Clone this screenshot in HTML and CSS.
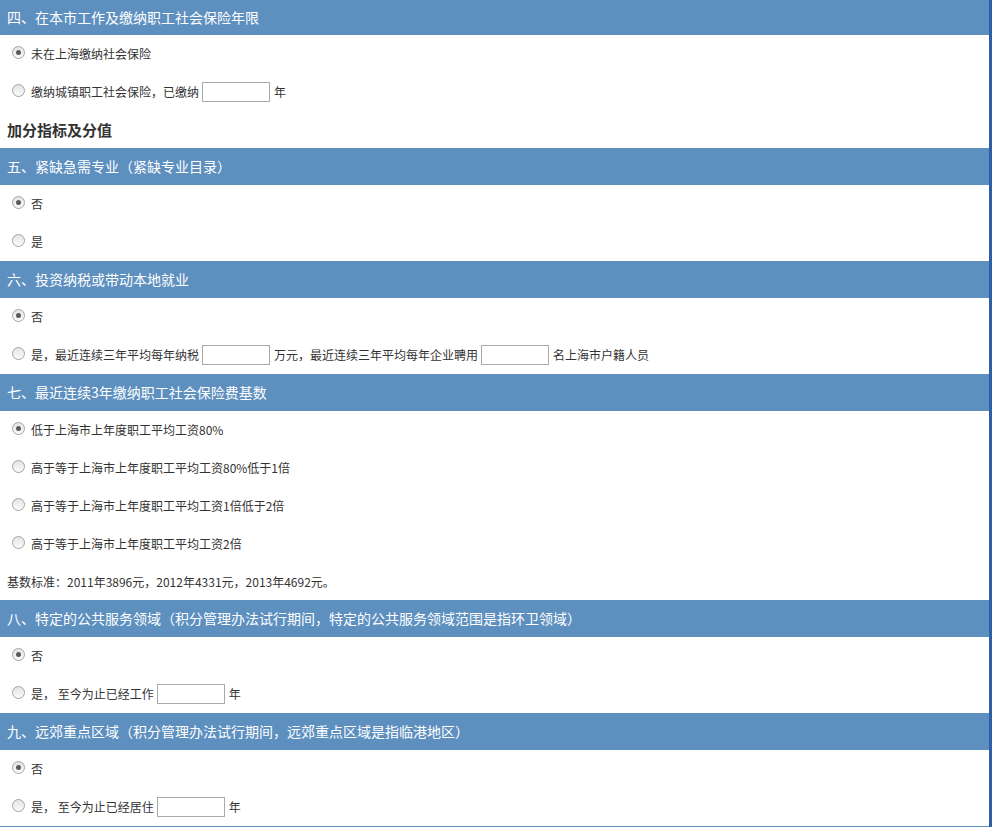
FILE: index.html
```html
<!DOCTYPE html>
<html lang="zh">
<head>
<meta charset="utf-8">
<title>积分指标</title>
<link rel="stylesheet" href="styles.css">
</head>
<body>
<div class="page">
  <div class="sec-head first">四、在本市工作及缴纳职工社会保险年限</div>
  <div class="row"><span class="radio checked"></span><span>未在上海缴纳社会保险</span></div>
  <div class="row"><span class="radio"></span><span>缴纳城镇职工社会保险，已缴纳</span><span class="box"></span><span>年</span></div>
  <div class="group-title">加分指标及分值</div>

  <div class="sec-head">五、紧缺急需专业（紧缺专业目录）</div>
  <div class="row"><span class="radio checked"></span><span>否</span></div>
  <div class="row"><span class="radio"></span><span>是</span></div>

  <div class="sec-head">六、投资纳税或带动本地就业</div>
  <div class="row"><span class="radio checked"></span><span>否</span></div>
  <div class="row"><span class="radio"></span><span>是，最近连续三年平均每年纳税</span><span class="box"></span><span>万元，最近连续三年平均每年企业聘用</span><span class="box"></span><span>名上海市户籍人员</span></div>

  <div class="sec-head">七、最近连续3年缴纳职工社会保险费基数</div>
  <div class="row"><span class="radio checked"></span><span>低于上海市上年度职工平均工资80%</span></div>
  <div class="row"><span class="radio"></span><span>高于等于上海市上年度职工平均工资80%低于1倍</span></div>
  <div class="row"><span class="radio"></span><span>高于等于上海市上年度职工平均工资1倍低于2倍</span></div>
  <div class="row"><span class="radio"></span><span>高于等于上海市上年度职工平均工资2倍</span></div>
  <div class="row note">基数标准：2011年3896元，2012年4331元，2013年4692元。</div>

  <div class="sec-head">八、特定的公共服务领域（积分管理办法试行期间，特定的公共服务领域范围是指环卫领域）</div>
  <div class="row"><span class="radio checked"></span><span>否</span></div>
  <div class="row"><span class="radio"></span><span>是， 至今为止已经工作</span><span class="box"></span><span>年</span></div>

  <div class="sec-head">九、远郊重点区域（积分管理办法试行期间，远郊重点区域是指临港地区）</div>
  <div class="row"><span class="radio checked"></span><span>否</span></div>
  <div class="row"><span class="radio"></span><span>是， 至今为止已经居住</span><span class="box"></span><span>年</span></div>

  <div class="sec-head"></div>
</div>
</body>
</html>
```

FILE: styles.css
```css
html, body {
  margin: 0;
  padding: 0;
  background: #ffffff;
  overflow: hidden;
}

body {
  font-family: "Noto Sans CJK SC", "Liberation Sans", sans-serif;
  color: #333333;
}

.page {
  width: 989px;
  border-right: 3px solid #2d5ea6;
  background: #ffffff;
}

.sec-head {
  height: 37px;
  line-height: 37px;
  background: #5d8fbf;
  color: #ffffff;
  font-size: 14px;
  padding-left: 7px;
  white-space: nowrap;
}

.sec-head.first {
  height: 35px;
  line-height: 35px;
}

.row {
  height: 38px;
  display: flex;
  align-items: center;
  padding-left: 12px;
  font-size: 12px;
  line-height: 16px;
  white-space: nowrap;
}

.row.note {
  padding-left: 7px;
  height: 37px;
}

.group-title {
  height: 37px;
  line-height: 37px;
  padding-left: 7px;
  font-size: 15px;
  font-weight: bold;
  color: #333333;
}

.radio {
  width: 11px;
  height: 11px;
  border: 1px solid #a4a4a4;
  border-radius: 50%;
  background: linear-gradient(#e4e4e4, #fbfbfb);
  margin-right: 6px;
  margin-top: -4px;
  position: relative;
  flex: none;
}

.radio.checked::after {
  content: "";
  position: absolute;
  left: 3px;
  top: 3px;
  width: 5px;
  height: 5px;
  border-radius: 50%;
  background: #5a5a5a;
}

.box {
  width: 66px;
  height: 18px;
  border: 1px solid #a9a9a9;
  background: #ffffff;
  margin: 0 4px 0 3px;
  flex: none;
}
```
